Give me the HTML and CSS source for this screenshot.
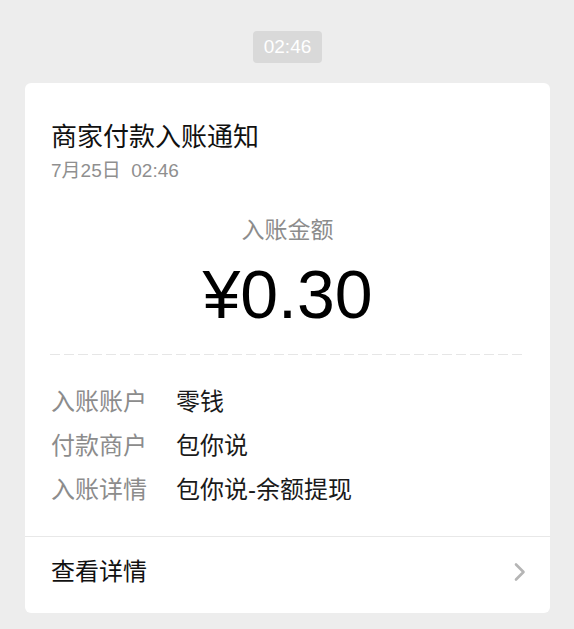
FILE: index.html
```html
<!DOCTYPE html>
<html lang="zh-CN">
<head>
<meta charset="utf-8">
<link rel="stylesheet" href="styles.css">
</head>
<body>
<div class="time-row"><span class="time-pill">02:46</span></div>
<div class="card">
  <div class="head">
    <div class="title">商家付款入账通知</div>
    <div class="date">7月25日&nbsp; 02:46</div>
  </div>
  <div class="amount-label">入账金额</div>
  <div class="amount">¥0.30</div>
  <div class="dash"></div>
  <div class="rows">
    <div class="row"><span class="label">入账账户</span><span class="value">零钱</span></div>
    <div class="row"><span class="label">付款商户</span><span class="value">包你说</span></div>
    <div class="row"><span class="label">入账详情</span><span class="value">包你说-余额提现</span></div>
  </div>
  <div class="footer">
    <span class="footer-text">查看详情</span>
    <svg class="chevron" width="14" height="20" viewBox="0 0 14 20"><path d="M3 2.5 L10.5 10 L3 17.5" fill="none" stroke="#b5b5b5" stroke-width="2.6" stroke-linecap="round" stroke-linejoin="round"/></svg>
  </div>
</div>
</body>
</html>
```

FILE: styles.css
```css
html, body {
  margin: 0;
  padding: 0;
}
body {
  background: #ededed;
  font-family: "Liberation Sans", "Noto Sans CJK SC", sans-serif;
  padding-top: 31px;
  color: #111;
}
.time-row {
  display: flex;
  justify-content: center;
  padding-left: 1px;
}
.time-pill {
  display: flex;
  align-items: center;
  height: 32px;
  padding: 0 11px;
  background: #d9d9d9;
  color: #fff;
  font-size: 19px;
  border-radius: 4px;
}
.card {
  margin: 20px 24px 0 25px;
  background: #fff;
  border-radius: 6px;
}
.head {
  padding: 37px 26px 0 26px;
}
.title {
  font-size: 26px;
  line-height: 34px;
  color: #111;
}
.date {
  margin-top: 4px;
  font-size: 19px;
  line-height: 26px;
  color: #8f8f8f;
}
.amount-label {
  margin-top: 31px;
  text-align: center;
  font-size: 23px;
  line-height: 30px;
  color: #8c8c8c;
}
.amount {
  margin-top: 9px;
  text-align: center;
  font-size: 68px;
  line-height: 80px;
  color: #000;
}
.dash {
  margin: 20px 27px 0 25px;
  height: 1px;
  background: repeating-linear-gradient(to right, #e6e6e6 0 10px, transparent 10px 14px);
}
.rows {
  padding: 25px 26px 24px 26px;
}
.row {
  display: flex;
  font-size: 24px;
  line-height: 44px;
}
.label {
  width: 125px;
  flex: none;
  color: #8c8c8c;
}
.value {
  color: #1a1a1a;
}
.footer {
  border-top: 1px solid #e8e8e8;
  display: flex;
  align-items: center;
  justify-content: space-between;
  padding: 20px 23px 26px 26px;
}
.footer-text {
  font-size: 24px;
  line-height: 30px;
  color: #111;
}
.chevron {
  display: block;
}
```
